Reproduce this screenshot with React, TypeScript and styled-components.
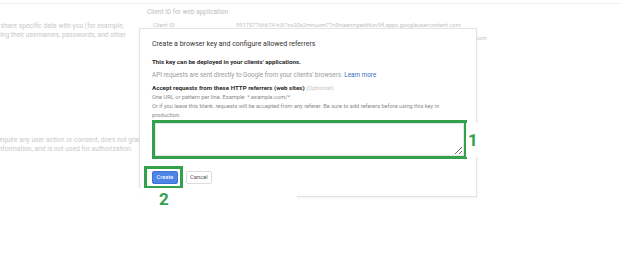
import React from "react";
import styled, { createGlobalStyle } from "styled-components";

const GREEN = "#33a04e";

const Global = createGlobalStyle`
  html, body { margin: 0; padding: 0; background: #fff; }
  body { font-family: Roboto, "Liberation Sans", Arial, sans-serif; }
  * { box-sizing: border-box; }
`;

const Page = styled.div`
  position: relative;
  width: 627px;
  height: 256px;
  overflow: hidden;
  background: #fff;
`;

const Backdrop = styled.div`
  padding-top: 3px;
  color: #c4c4c4;
  font-size: 6.5px;
  line-height: 9px;
`;

const TopRule = styled.div`
  height: 1px;
  margin-right: 7px;
  background: #efefef;
`;

const Columns = styled.div`
  display: grid;
  grid-template-columns: 139px 1fr;
`;

const LeftCol = styled.div`
  overflow: hidden;
  padding-top: 18px;
`;

const FadedPara = styled.p<{ $shift: number; $gap?: number }>`
  margin: ${(p) => p.$gap ?? 0}px 0 0 ${(p) => -p.$shift}px;
  white-space: nowrap;
  font-size: 6.7px;
  line-height: 8.5px;
  color: #c9c9c9;
`;

const RightCol = styled.div`
  padding: 4px 0 0 8px;
`;

const SectionTitle = styled.div`
  color: #bdbdbd;
`;

const InfoRow = styled.div<{ $gap: number; $label: number }>`
  display: grid;
  grid-template-columns: ${(p) => p.$label}px auto;
  margin-top: ${(p) => p.$gap}px;
  padding-left: 6px;
  white-space: nowrap;
  font-size: 5.75px;
`;

const Dialog = styled.div`
  position: absolute;
  left: 139px;
  top: 28px;
  width: 338px;
  height: 169px;
  background: #fff;
  border: 1px solid #e3e3e3;
  box-shadow: 0 1px 3px rgba(0, 0, 0, 0.06);
  padding: 10px 12px 0 12px;
  color: #3a3a3a;
`;

const DialogTitle = styled.h2`
  margin: 0;
  font-weight: 400;
  font-size: 7px;
  line-height: 10px;
  color: #333;
`;

const Strong = styled.p<{ $gap: number; $size: number }>`
  margin: ${(p) => p.$gap}px 0 0;
  font-weight: 700;
  font-size: ${(p) => p.$size}px;
  line-height: 9px;
  color: #2a2a2a;
`;

const Muted = styled.p<{ $gap?: number }>`
  margin: ${(p) => p.$gap ?? 0}px 0 0;
  font-size: 6.35px;
  line-height: 9px;
  color: #9a9a9a;
`;

const Hint = styled.p<{ $size: number }>`
  margin: 0;
  font-size: ${(p) => p.$size}px;
  line-height: 9px;
  color: #8a8a8a;
`;

const Link = styled.a`
  color: #3b6fc4;
  text-decoration: none;
`;

const Optional = styled.span`
  font-weight: 400;
  color: #c4c4c4;
`;

const GreenFrame = styled.div`
  border: 3px solid ${GREEN};
`;

const FieldFrame = styled(GreenFrame)`
  width: 315px;
  height: 39px;
  padding: 0;
`;

const Field = styled.textarea`
  display: block;
  width: 100%;
  height: 100%;
  margin: 0;
  border: 1px solid #e6e6e6;
  resize: both;
  background: #fff;
`;

const Actions = styled.div`
  display: flex;
  align-items: center;
  gap: 3px;
  margin: 7px 0 0 -8px;
`;

const ButtonFrame = styled(GreenFrame)`
  display: flex;
  padding: 2px 2px 2px 5px;
`;

const Button = styled.button<{ $primary?: boolean }>`
  display: block;
  height: 13px;
  padding: 0 3px;
  border-radius: 2px;
  font-family: inherit;
  font-size: 5.8px;
  line-height: 11px;
  border: 1px solid ${(p) => (p.$primary ? "#3e72d4" : "#dcdcdc")};
  background: ${(p) => (p.$primary ? "#4c84e8" : "#fff")};
  color: ${(p) => (p.$primary ? "#fff" : "#555")};
  min-width: ${(p) => (p.$primary ? 26 : 24)}px;
`;

const Marker = styled.div<{ $left: number; $top: number; $w: number; $h: number; $pad: number }>`
  position: absolute;
  left: ${(p) => p.$left}px;
  top: ${(p) => p.$top}px;
  width: ${(p) => p.$w}px;
  height: ${(p) => p.$h}px;
  padding-left: ${(p) => p.$pad}px;
  display: flex;
  align-items: center;
  background: #fff;
  color: ${GREEN};
  font-size: 17px;
  font-weight: 700;
  line-height: 1;
`;

export default function App() {
  return (
    <Page>
      <Global />
      <Backdrop>
        <TopRule />
        <Columns>
          <LeftCol>
            <FadedPara $shift={7}>
              to share specific data with you (for example,
              <br />
              using their usernames, passwords, and other
            </FadedPara>
            <FadedPara $shift={3} $gap={97}>
              require any user action or consent, does not grant
              <br />
              information, and is not used for authorization.
            </FadedPara>
          </LeftCol>
          <RightCol>
            <SectionTitle>Client ID for web application</SectionTitle>
            <InfoRow $gap={4} $label={83}>
              <span>Client ID</span>
              <span>991757766674-h3i7ov20s2mnuum77n5niaenngadd6ov9fl.apps.googleusercontent.com</span>
            </InfoRow>
            <InfoRow $gap={4} $label={99}>
              <span>Email address</span>
              <span>991757766674-h3i7ov20s2mnuum77n5niaenngadd6ov9fl@developer.gserviceaccount.com</span>
            </InfoRow>
          </RightCol>
        </Columns>
      </Backdrop>

      <Dialog>
        <DialogTitle>Create a browser key and configure allowed referrers</DialogTitle>
        <Strong $gap={9} $size={6.2}>This key can be deployed in your clients' applications.</Strong>
        <Muted $gap={4}>
          API requests are sent directly to Google from your clients' browsers. <Link>Learn more</Link>
        </Muted>
        <Strong $gap={4} $size={6.2}>
          Accept requests from these HTTP referrers (web sites) <Optional>(Optional)</Optional>
        </Strong>
        <Hint $size={5.7}>One URL or pattern per line. Example: *.example.com/*</Hint>
        <Hint $size={5.65}>
          Or if you leave this blank, requests will be accepted from any referer. Be sure to add referers before using this key in
          <br />
          production.
        </Hint>
        <FieldFrame>
          <Field />
        </FieldFrame>
        <Actions>
          <ButtonFrame>
            <Button $primary>Create</Button>
          </ButtonFrame>
          <Button>Cancel</Button>
        </Actions>
      </Dialog>

      <Marker $left={466} $top={123} $w={13} $h={34} $pad={2}>1</Marker>
      <Marker $left={138} $top={188} $w={159} $h={22} $pad={21}>2</Marker>
    </Page>
  );
}
